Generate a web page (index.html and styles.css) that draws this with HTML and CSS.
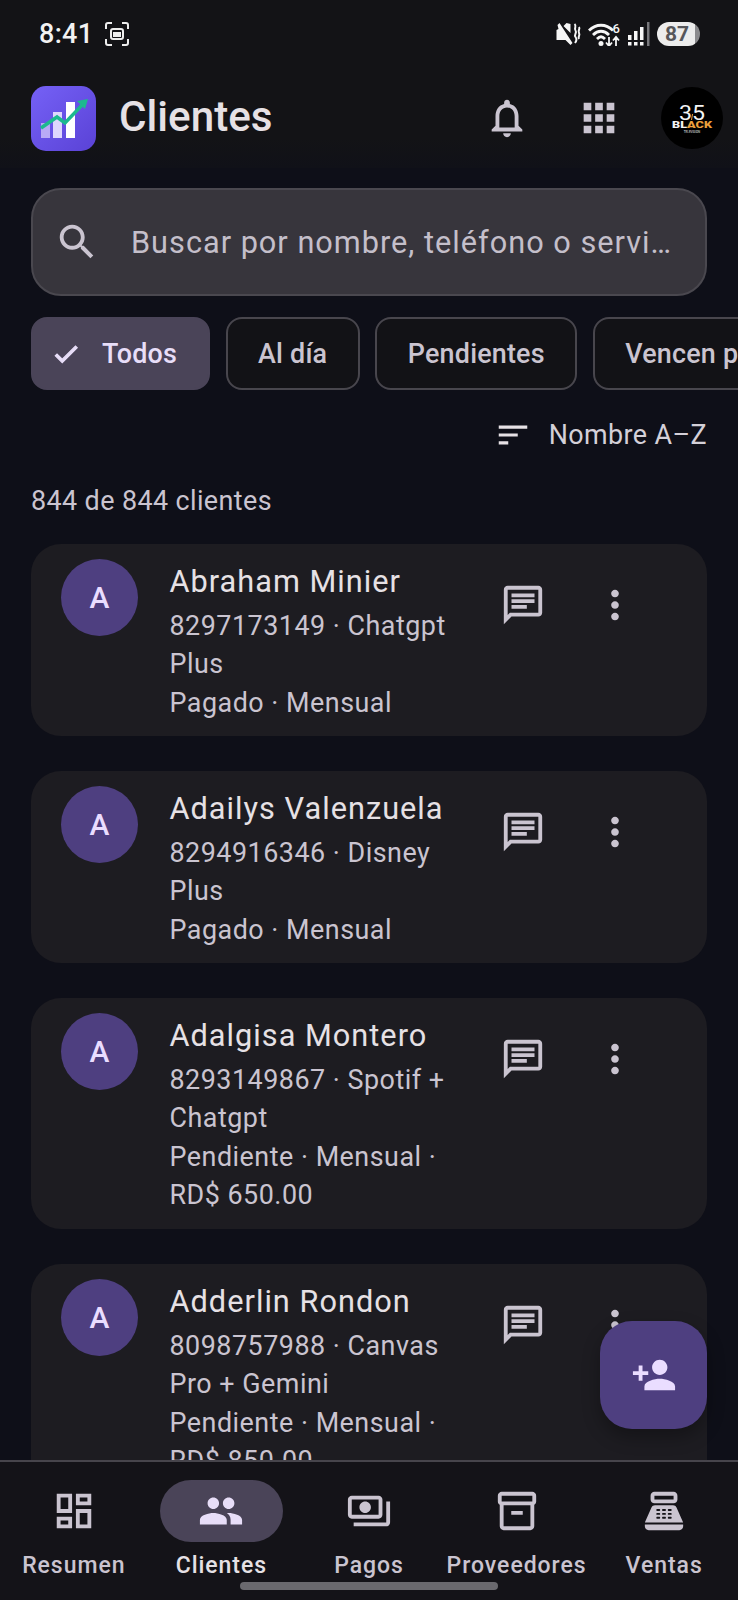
FILE: index.html
```html
<!DOCTYPE html>
<html lang="es">
<head>
<meta charset="utf-8">
<title>Clientes</title>
<link rel="stylesheet" href="styles.css">
</head>
<body>
<div class="app">
  <div class="status">
    <div class="status-left">
      <span class="time">8:41</span>
      <svg class="rec" viewBox="0 0 26 26"><path d="M2 8V4a2 2 0 0 1 2-2h4M18 2h4a2 2 0 0 1 2 2v4M24 18v4a2 2 0 0 1-2 2h-4M8 24H4a2 2 0 0 1-2-2v-4" fill="none" stroke="#eee" stroke-width="2"/><rect x="7" y="8" width="12" height="10" rx="2" fill="none" stroke="#eee" stroke-width="2"/><rect x="9" y="11" width="8" height="5" fill="#eee"/></svg>
    </div>
    <div class="status-right">
      <svg class="s-mute" viewBox="0 0 24 24"><path d="M0 8l2-1-1-4 2-2 13 20-2 2-5-5H0z M7 4l3-3 4 1v9z" fill="#f6f6f6"/><path d="M18 2c3 2.500-1 4 1 6.500s-2 4 0 6.500 1 4-.5 6M22.500 5c1.500 2.500-1.500 3 0 6s-1.500 3 0 6" fill="none" stroke="#f6f6f6" stroke-width="2"/></svg>
      <svg class="s-wifi" viewBox="0 0 34 24"><path d="M1 8.500c7-7 17-7 24 0M5 13c5-5 11-5 16 0M9 17c3-3 5-3 8 0" fill="none" stroke="#f6f6f6" stroke-width="2.800"/><circle cx="13" cy="21.500" r="2.500" fill="#f6f6f6"/><path d="M21 15v9M18 20.500l3 3.500 3-3.500M28 24v-9M25 18.500l3-3.500 3 3.500" fill="none" stroke="#f6f6f6" stroke-width="1.800"/><text x="24.500" y="10.500" class="s-six">6</text></svg>
      <svg class="s-signal" viewBox="0 0 22 24"><path d="M0 13h3.500v5H0zM0 20h3.500v3.500H0zM6 9h3.500v9H6zM6 20h3.500v3.500H6zM12 5h3.500v13H12zM12 20h3.500v3.500H12z" fill="#f6f6f6"/><path d="M19 0h2.500v24H19z" fill="#77777b"/></svg>
      <div class="battery"><span>87</span></div>
    </div>
  </div>

  <header class="top">
    <svg class="logo" viewBox="0 0 65 65"><defs><linearGradient id="lg" x1="0" y1="0" x2="1" y2="1"><stop offset="0" stop-color="#7561f6"/><stop offset="1" stop-color="#5a42d6"/></linearGradient></defs><rect width="65" height="65" rx="15" fill="url(#lg)"/><rect x="10" y="37" width="9" height="15" fill="#b9aaf6"/><rect x="22" y="26" width="9" height="26" fill="#ded6fd"/><rect x="35" y="16" width="9" height="36" fill="#fff"/><path d="M10 42l16-11 8 6 20-21" fill="none" stroke="#1cb98f" stroke-width="3.500"/><path d="M46 15l11-2-3 10z" fill="#1cb98f"/></svg>
    <h1 class="title">Clientes</h1>
    <div class="top-actions">
      <svg class="ico-bell" viewBox="0 0 24 24"><path d="M12 22c1.100 0 2-.9 2-2h-4c0 1.100.9 2 2 2zm6-6v-5c0-3.070-1.630-5.640-4.500-6.320V4c0-.83-.67-1.500-1.500-1.500s-1.500.67-1.500 1.500v.68C7.640 5.360 6 7.920 6 11v5l-2 2v1h16v-1l-2-2zm-2 1H8v-6c0-2.480 1.510-4.500 4-4.500s4 2.020 4 4.500v6z"/></svg>
      <svg class="ico-apps" viewBox="0 0 24 24"><path d="M4 8h4V4H4v4zm6 12h4v-4h-4v4zm-6 0h4v-4H4v4zm0-6h4v-4H4v4zm6 0h4v-4h-4v4zm6-10v4h4V4h-4zm-6 4h4V4h-4v4zm6 6h4v-4h-4v4zm0 6h4v-4h-4v4z"/></svg>
      <svg class="brand" viewBox="0 0 62 62"><circle cx="31" cy="31" r="31" fill="#000"/><text x="31" y="33" class="b-35" textLength="26" lengthAdjust="spacingAndGlyphs">35</text><path d="M31.500 27l-1 6" stroke="#eda13c" stroke-width="1"/><text x="31" y="41" class="b-black" textLength="40" lengthAdjust="spacingAndGlyphs">BL<tspan class="b-orange">ACK</tspan></text><text x="31" y="45.500" class="b-small">TELEVISION</text></svg>
    </div>
  </header>

  <main class="content">
    <div class="search">
      <svg class="ico-search" viewBox="0 0 24 24"><path d="M15.500 14h-.79l-.28-.27C15.410 12.590 16 11.110 16 9.500 16 5.910 13.090 3 9.500 3S3 5.910 3 9.500 5.910 16 9.500 16c1.610 0 3.090-.59 4.230-1.570l.27.28v.79l5 4.990L20.490 19l-4.990-5zm-6 0C7.010 14 5 11.990 5 9.500S7.010 5 9.500 5 14 7.010 14 9.500 11.990 14 9.500 14z"/></svg>
      <span class="search-text">Buscar por nombre, teléfono o servi…</span>
    </div>

    <div class="chips">
      <div class="chip chip-on"><svg class="ico-check" viewBox="0 0 24 24"><path d="M9 16.170L4.830 12l-1.420 1.410L9 19 21 7l-1.410-1.410z"/></svg>Todos</div>
      <div class="chip">Al día</div>
      <div class="chip">Pendientes</div>
      <div class="chip">Vencen pronto</div>
    </div>

    <div class="sort">
      <svg class="ico-sort" viewBox="0 0 24 24"><path d="M3 18h6v-2H3v2zM3 6v2h18V6H3zm0 7h12v-2H3v2z"/></svg>
      <span>Nombre A–Z</span>
    </div>

    <p class="count">844 de 844 clientes</p>

    <div class="list">
      <article class="card">
        <div class="avatar">A</div>
        <div class="info">
          <div class="name">Abraham Minier</div>
          <div class="sub">8297173149 · Chatgpt Plus</div>
          <div class="sub">Pagado · Mensual</div>
        </div>
        <div class="card-actions">
          <button class="icon-btn"><svg viewBox="0 0 24 24"><path d="M4 4h16v12H5.170L4 17.170V4m0-2c-1.100 0-1.990.9-1.990 2L2 22l4-4h14c1.100 0 2-.9 2-2V4c0-1.100-.9-2-2-2H4zm2 10h8v2H6v-2zm0-3h12v2H6V9zm0-3h12v2H6V6z"/></svg></button>
          <button class="icon-btn"><svg viewBox="0 0 24 24"><path d="M12 8c1.100 0 2-.9 2-2s-.9-2-2-2-2 .9-2 2 .9 2 2 2zm0 2c-1.100 0-2 .9-2 2s.9 2 2 2 2-.9 2-2-.9-2-2-2zm0 6c-1.100 0-2 .9-2 2s.9 2 2 2 2-.9 2-2-.9-2-2-2z"/></svg></button>
        </div>
      </article>
      <article class="card">
        <div class="avatar">A</div>
        <div class="info">
          <div class="name">Adailys Valenzuela</div>
          <div class="sub">8294916346 · Disney Plus</div>
          <div class="sub">Pagado · Mensual</div>
        </div>
        <div class="card-actions">
          <button class="icon-btn"><svg viewBox="0 0 24 24"><path d="M4 4h16v12H5.170L4 17.170V4m0-2c-1.100 0-1.990.9-1.990 2L2 22l4-4h14c1.100 0 2-.9 2-2V4c0-1.100-.9-2-2-2H4zm2 10h8v2H6v-2zm0-3h12v2H6V9zm0-3h12v2H6V6z"/></svg></button>
          <button class="icon-btn"><svg viewBox="0 0 24 24"><path d="M12 8c1.100 0 2-.9 2-2s-.9-2-2-2-2 .9-2 2 .9 2 2 2zm0 2c-1.100 0-2 .9-2 2s.9 2 2 2 2-.9 2-2-.9-2-2-2zm0 6c-1.100 0-2 .9-2 2s.9 2 2 2 2-.9 2-2-.9-2-2-2z"/></svg></button>
        </div>
      </article>
      <article class="card">
        <div class="avatar">A</div>
        <div class="info">
          <div class="name">Adalgisa Montero</div>
          <div class="sub">8293149867 · Spotif + Chatgpt</div>
          <div class="sub">Pendiente · Mensual · RD$ 650.00</div>
        </div>
        <div class="card-actions">
          <button class="icon-btn"><svg viewBox="0 0 24 24"><path d="M4 4h16v12H5.170L4 17.170V4m0-2c-1.100 0-1.990.9-1.990 2L2 22l4-4h14c1.100 0 2-.9 2-2V4c0-1.100-.9-2-2-2H4zm2 10h8v2H6v-2zm0-3h12v2H6V9zm0-3h12v2H6V6z"/></svg></button>
          <button class="icon-btn"><svg viewBox="0 0 24 24"><path d="M12 8c1.100 0 2-.9 2-2s-.9-2-2-2-2 .9-2 2 .9 2 2 2zm0 2c-1.100 0-2 .9-2 2s.9 2 2 2 2-.9 2-2-.9-2-2-2zm0 6c-1.100 0-2 .9-2 2s.9 2 2 2 2-.9 2-2-.9-2-2-2z"/></svg></button>
        </div>
      </article>
      <article class="card">
        <div class="avatar">A</div>
        <div class="info">
          <div class="name">Adderlin Rondon</div>
          <div class="sub">8098757988 · Canvas Pro + Gemini</div>
          <div class="sub">Pendiente · Mensual · RD$ 850.00</div>
        </div>
        <div class="card-actions">
          <button class="icon-btn"><svg viewBox="0 0 24 24"><path d="M4 4h16v12H5.170L4 17.170V4m0-2c-1.100 0-1.990.9-1.990 2L2 22l4-4h14c1.100 0 2-.9 2-2V4c0-1.100-.9-2-2-2H4zm2 10h8v2H6v-2zm0-3h12v2H6V9zm0-3h12v2H6V6z"/></svg></button>
          <button class="icon-btn"><svg viewBox="0 0 24 24"><path d="M12 8c1.100 0 2-.9 2-2s-.9-2-2-2-2 .9-2 2 .9 2 2 2zm0 2c-1.100 0-2 .9-2 2s.9 2 2 2 2-.9 2-2-.9-2-2-2zm0 6c-1.100 0-2 .9-2 2s.9 2 2 2 2-.9 2-2-.9-2-2-2z"/></svg></button>
        </div>
      </article>
    </div>
  </main>

  <button class="fab"><svg viewBox="0 0 24 24"><path d="M15 12c2.210 0 4-1.790 4-4s-1.790-4-4-4-4 1.790-4 4 1.790 4 4 4zm-9-2V7H4v3H1v2h3v3h2v-3h3v-2H6zm9 4c-2.670 0-8 1.340-8 4v2h16v-2c0-2.660-5.330-4-8-4z"/></svg></button>

  <nav class="nav">
    <div class="nav-item">
      <div class="pill"><svg viewBox="0 0 24 24"><path d="M19 5v2h-4V5h4M9 5v6H5V5h4m10 8v6h-4v-6h4M9 17v2H5v-2h4M21 3h-8v6h8V3zM11 3H3v10h8V3zm10 8h-8v10h8V11zm-10 4H3v6h8v-6z"/></svg></div>
      <span class="nav-label">Resumen</span>
    </div>
    <div class="nav-item nav-on">
      <div class="pill"><svg viewBox="0 0 24 24"><path d="M16 11c1.660 0 2.990-1.340 2.990-3S17.660 5 16 5c-1.660 0-3 1.340-3 3s1.340 3 3 3zm-8 0c1.660 0 2.990-1.340 2.990-3S9.660 5 8 5C6.340 5 5 6.340 5 8s1.340 3 3 3zm0 2c-2.330 0-7 1.170-7 3.500V19h14v-2.500c0-2.330-4.670-3.500-7-3.500zm8 0c-.29 0-.62.020-.97.050 1.160.84 1.970 1.970 1.970 3.450V19h6v-2.500c0-2.330-4.670-3.500-7-3.500z"/></svg></div>
      <span class="nav-label">Clientes</span>
    </div>
    <div class="nav-item">
      <div class="pill"><svg viewBox="0 0 24 24"><path d="M19 14V6c0-1.100-.9-2-2-2H3c-1.100 0-2 .9-2 2v8c0 1.100.9 2 2 2h14c1.100 0 2-.9 2-2zm-2 0H3V6h14v8zm-7-7c-1.660 0-3 1.340-3 3s1.340 3 3 3 3-1.340 3-3-1.340-3-3-3zm13 0v11c0 1.100-.9 2-2 2H4v-2h17V7h2z"/></svg></div>
      <span class="nav-label">Pagos</span>
    </div>
    <div class="nav-item">
      <div class="pill"><svg viewBox="0 0 24 24"><path d="M20 2H4c-1 0-2 .9-2 2v3.010c0 .72.43 1.340 1 1.690V20c0 1.100 1.100 2 2 2h14c.9 0 2-.9 2-2V8.700c.57-.35 1-.97 1-1.690V4c0-1.100-1-2-2-2zm-1 18H5V9h14v11zm1-13H4V4h16v3zM9 12h6v2H9z"/></svg></div>
      <span class="nav-label">Proveedores</span>
    </div>
    <div class="nav-item">
      <div class="pill"><svg viewBox="0 0 24 24"><path d="M17 2H7c-1.100 0-2 .9-2 2v2c0 1.100.9 2 2 2h10c1.100 0 2-.9 2-2V4c0-1.100-.9-2-2-2zm0 4H7V4h10v2zm3 16H4c-1.100 0-2-.9-2-2v-1h20v1c0 1.100-.9 2-2 2zm-1.470-11.810C18.210 9.470 17.490 9 16.700 9H7.300c-.79 0-1.510.47-1.830 1.190L2 18h20l-3.470-7.810zM9.500 16h-1c-.28 0-.5-.22-.5-.5s.22-.5.5-.5h1c.28 0 .5.22.5.5s-.22.5-.5.5zm0-2h-1c-.28 0-.5-.22-.5-.5s.22-.5.5-.5h1c.28 0 .5.22.5.5s-.22.5-.5.5zm0-2h-1c-.28 0-.5-.22-.5-.5s.22-.5.5-.5h1c.28 0 .5.22.5.5s-.22.5-.5.5zm3 4h-1c-.28 0-.5-.22-.5-.5s.22-.5.5-.5h1c.28 0 .5.22.5.5s-.22.5-.5.5zm0-2h-1c-.28 0-.5-.22-.5-.5s.22-.5.5-.5h1c.28 0 .5.22.5.5s-.22.5-.5.5zm0-2h-1c-.28 0-.5-.22-.5-.5s.22-.5.5-.5h1c.28 0 .5.22.5.5s-.22.5-.5.5zm3 4h-1c-.28 0-.5-.22-.5-.5s.22-.5.5-.5h1c.28 0 .5.22.5.5s-.22.5-.5.5zm0-2h-1c-.28 0-.5-.22-.5-.5s.22-.5.5-.5h1c.28 0 .5.22.5.5s-.22.5-.5.5zm0-2h-1c-.28 0-.5-.22-.5-.5s.22-.5.5-.5h1c.28 0 .5.22.5.5s-.22.5-.5.5z" fill-rule="evenodd"/></svg></div>
      <span class="nav-label">Ventas</span>
    </div>
    <div class="home-bar"></div>
  </nav>
</div>
</body>
</html>
```

FILE: styles.css
```css
* { box-sizing: border-box; }
html, body { margin: 0; padding: 0; }
body { width: 738px; height: 1600px; overflow: hidden; background: #0e1018; font-family: Roboto, "Liberation Sans", sans-serif; }
svg { display: block; fill: currentColor; flex-shrink: 0; }
p, h1 { margin: 0; }
button { border: 0; background: none; padding: 0; color: inherit; }

.app { position: relative; width: 738px; height: 1600px; display: flex; flex-direction: column; overflow: hidden; }

.status { height: 68px; flex-shrink: 0; background: #131316; display: flex; align-items: center; justify-content: space-between; padding: 0 38px 0 39px; }
.status-left { display: flex; align-items: center; gap: 11px; }
.time { font-size: 27px; font-weight: 500; color: #f2f2f2; letter-spacing: .3px; }
.rec { width: 26px; height: 26px; }
.status-right { display: flex; align-items: center; }
.s-mute { width: 25px; height: 24px; margin-right: 7px; }
.s-wifi { width: 34px; height: 24px; margin-right: 6px; }
.s-six { font: 500 13px Roboto, sans-serif; fill: #f6f6f6; }
.s-signal { width: 22px; height: 24px; margin-right: 7px; }
.battery { width: 43px; height: 24px; border-radius: 12px; background: linear-gradient(90deg, #ececec 88%, #8a8a8d 88%); display: flex; align-items: center; justify-content: center; padding-right: 3px; }
.battery span { font-size: 21px; font-weight: 700; color: #56565a; }

.top { height: 100px; flex-shrink: 0; background: linear-gradient(#131316 70%, #101118); display: flex; align-items: center; padding: 0 15px 0 31px; }
.logo { width: 65px; height: 65px; }
.title { font-size: 42.2px; line-height: 48px; font-weight: 500; color: #e6e1e5; margin: -2px 0 0 23px; flex: 1; }
.top-actions { display: flex; align-items: center; }
.ico-bell { width: 46px; height: 46px; color: #cac4d0; margin-right: 46px; }
.ico-apps { width: 46px; height: 46px; color: #cac4d0; margin-right: 39px; }
.brand { width: 62px; height: 62px; }
.b-35 { font: 400 21px Roboto, sans-serif; fill: #f4f4f4; text-anchor: middle; }
.b-black { font: 900 9px Roboto, sans-serif; fill: #f4f4f4; text-anchor: middle; }
.b-orange { fill: #eda13c; }
.b-small { font: 500 3px Roboto, sans-serif; fill: #ccc; text-anchor: middle; }

.content { flex: 1; min-height: 0; overflow: hidden; padding-top: 20px; background: #0e0f18; }
.search { margin: 0 31px; height: 108px; border-radius: 30px; background: #37353c; border: 2px solid #4a484f; display: flex; align-items: center; padding-left: 21px; gap: 31px; }
.ico-search { width: 46px; height: 46px; color: #cac4d0; }
.search-text { font-size: 30.7px; color: #c4bfca; letter-spacing: 1px; white-space: nowrap; }

.chips { display: flex; gap: 15.5px; padding-left: 31px; margin-top: 21px; overflow: hidden; }
.chip { height: 73px; flex-shrink: 0; border-radius: 16px; border: 2px solid #48464d; display: flex; align-items: center; padding: 0 30.5px; font-size: 26.9px; font-weight: 500; color: #cac4d0; letter-spacing: .2px; background: #121216; white-space: nowrap; }
.chip-on { background: #4a4458; border-color: #4a4458; color: #e8def8; padding-left: 18px; padding-right: 31px; gap: 21px; }
.ico-check { width: 30px; height: 30px; color: #e8def8; stroke: currentColor; stroke-width: .9; }

.sort { display: flex; align-items: center; justify-content: flex-end; height: 46px; margin: 22px 31px 0 0; gap: 17px; font-size: 26.9px; color: #d4d0d8; letter-spacing: .4px; }
.ico-sort { width: 38px; height: 38px; color: #e6e1e5; }

.count { margin: 23px 0 0 31px; font-size: 26.9px; line-height: 40px; color: #cac4d0; letter-spacing: .4px; }

.list { display: flex; flex-direction: column; gap: 35.2px; margin: 23px 31px 0; }
.card { background: #1d1c21; border-radius: 30px; padding: 15px 30px 14px 30px; display: flex; align-items: flex-start; flex-shrink: 0; }
.avatar { width: 77px; height: 77px; border-radius: 50%; background: #4e3f80; color: #eaddff; display: flex; align-items: center; justify-content: center; font-size: 30px; font-weight: 500; flex-shrink: 0; }
.info { width: 307.5px; margin-left: 31.500px; padding-top: 1px; flex-shrink: 0; }
.name { font-size: 30.7px; line-height: 44px; color: #e6e1e5; letter-spacing: 1.02px; margin-bottom: 2.5px; }
.sub { font-size: 26.9px; line-height: 38.5px; color: #cac4d0; letter-spacing: .5px; }
.card-actions { display: flex; }
.icon-btn { width: 92px; height: 92px; display: flex; align-items: center; justify-content: center; color: #cac4d0; }
.icon-btn svg { width: 46px; height: 46px; }

.fab { position: absolute; left: 600px; top: 1321px; width: 107px; height: 108px; border-radius: 32px; background: #4e3f80; color: #eaddff; display: flex; align-items: center; justify-content: center; box-shadow: 0 8px 18px rgba(0,0,0,.3); }
.fab svg { width: 46px; height: 46px; }

.nav { position: relative; height: 140px; flex-shrink: 0; background: #141318; border-top: 2px solid #47454c; display: flex; padding-top: 18px; }
.nav-item { flex: 1; display: flex; flex-direction: column; align-items: center; }
.pill { width: 123px; height: 62px; border-radius: 31px; display: flex; align-items: center; justify-content: center; color: #cac4d0; }
.pill svg { width: 46px; height: 46px; }
.nav-label { margin-top: 10px; font-size: 23px; line-height: 28px; font-weight: 500; color: #cac4d0; letter-spacing: .96px; white-space: nowrap; }
.nav-on .pill { background: #4a4458; color: #e8def8; }
.nav-on .nav-label { color: #e6e1e5; }
.home-bar { position: absolute; left: 240px; top: 120px; width: 258px; height: 8px; border-radius: 4px; background: #6a696e; }
```
